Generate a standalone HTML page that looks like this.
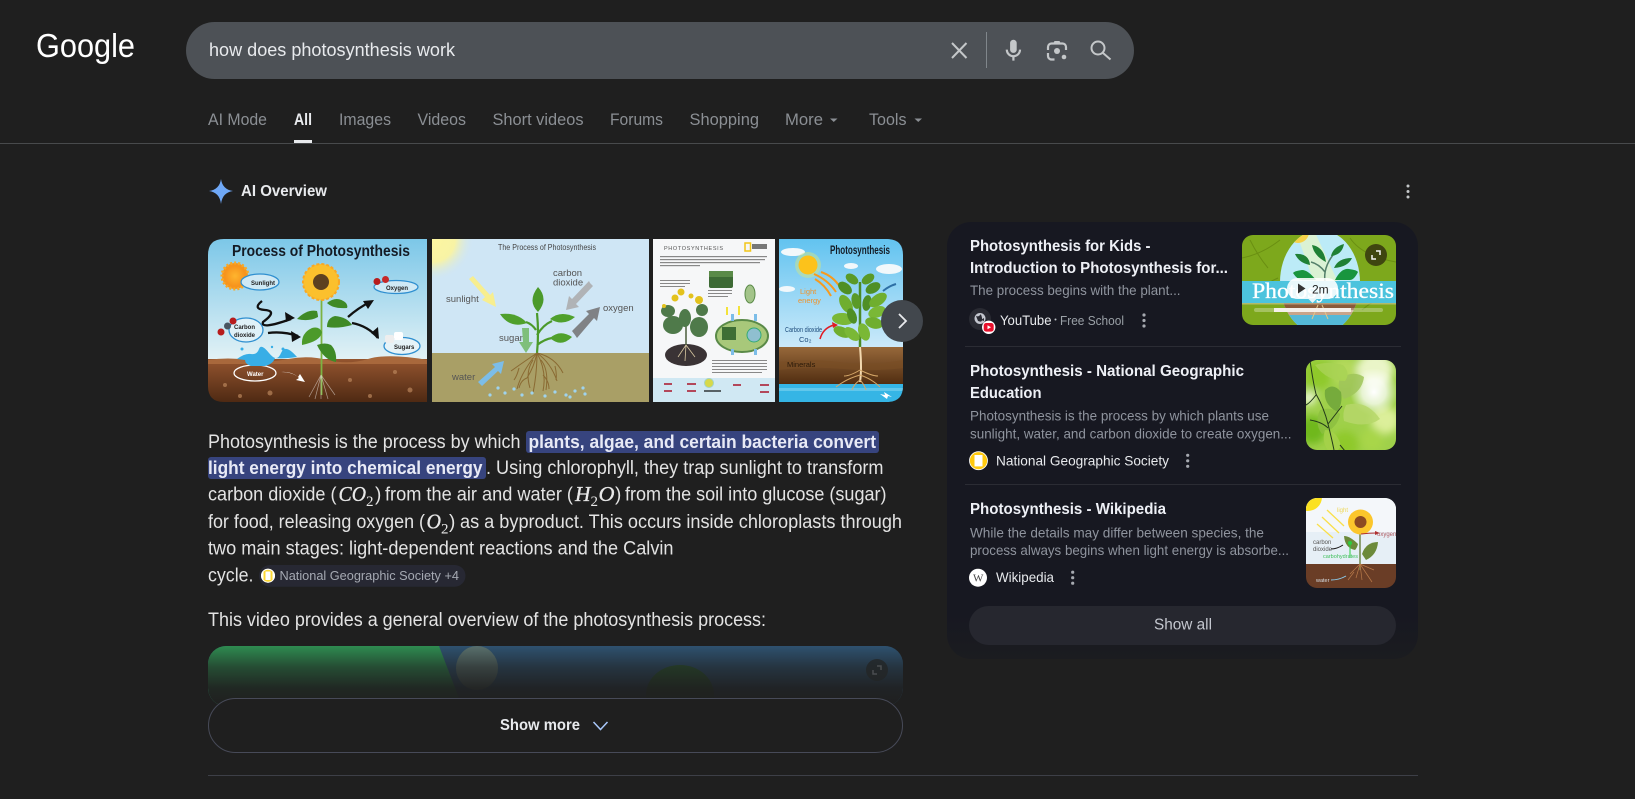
<!DOCTYPE html>
<html lang="en"><head><meta charset="utf-8"><title>how does photosynthesis work - Google Search</title>
<style>
html,body{margin:0;padding:0;background:#1f1f1f;width:1635px;height:799px;overflow:hidden}
svg{display:block}
text{font-family:"Liberation Sans",Arial,sans-serif}
.tab{font-size:16.5px;fill:#8b8f94}
.b{font-size:19px;fill:#e3e3e3}
.hl{font-size:18.5px;fill:#e8eaf6;font-weight:bold}
.m{font-family:"Liberation Serif",serif;font-style:italic;font-size:21px;fill:#e8e8e8;stroke:#e8e8e8;stroke-width:.3}
.s{font-family:"Liberation Serif",serif;font-size:15px;fill:#e8e8e8}
.t{font-size:15.5px;font-weight:bold;fill:#eef0f6}
.sn{font-size:14px;fill:#8f949e}
.src{font-size:14px;fill:#e8eaed}
.lbl{font-weight:bold;fill:#222}
</style></head><body>
<svg width="1635" height="799" viewBox="0 0 1635 799" xmlns="http://www.w3.org/2000/svg">
<defs>
<clipPath id="c1"><path d="M224 239H427V402H224Q208 402 208 386V255Q208 239 224 239Z"/></clipPath>
<clipPath id="c2"><rect x="432" y="239" width="217" height="163"/></clipPath>
<clipPath id="c3"><rect x="653" y="239" width="122" height="163"/></clipPath>
<clipPath id="c4"><path d="M779 239H887Q903 239 903 255V386Q903 402 887 402H779Z"/></clipPath>
<clipPath id="c5"><rect x="1242" y="235" width="154" height="90" rx="11"/></clipPath>
<clipPath id="c6"><rect x="1306" y="360" width="90" height="90" rx="11"/></clipPath>
<clipPath id="c7"><rect x="1306" y="498" width="90" height="90" rx="11"/></clipPath>
<clipPath id="c8"><rect x="208" y="646" width="695" height="60" rx="18"/></clipPath>
<clipPath id="ov"><ellipse cx="1320" cy="282" rx="40" ry="52"/></clipPath>
<linearGradient id="sky1" x1="0" y1="0" x2="0" y2="1"><stop offset="0" stop-color="#7cc7e8"/><stop offset="1" stop-color="#e6f3f6"/></linearGradient>
<linearGradient id="soil1" x1="0" y1="0" x2="0" y2="1"><stop offset="0" stop-color="#94552f"/><stop offset="1" stop-color="#4f2a13"/></linearGradient>
<linearGradient id="sky4" x1="0" y1="0" x2="0" y2="1"><stop offset="0" stop-color="#62c3f0"/><stop offset="1" stop-color="#cdeafa"/></linearGradient>
<linearGradient id="soil4" x1="0" y1="0" x2="0" y2="1"><stop offset="0" stop-color="#97683a"/><stop offset="1" stop-color="#4f2c10"/></linearGradient>
<linearGradient id="fade" x1="0" y1="0" x2="0" y2="1"><stop offset="0" stop-color="#1f1f1f" stop-opacity=".05"/><stop offset=".35" stop-color="#1f1f1f" stop-opacity=".6"/><stop offset=".7" stop-color="#1f1f1f" stop-opacity=".92"/><stop offset="1" stop-color="#1f1f1f"/></linearGradient>
<linearGradient id="panelfade" x1="0" y1="0" x2="0" y2="1"><stop offset="0" stop-color="#171821"/><stop offset=".9" stop-color="#171821"/><stop offset="1" stop-color="#1b1c20"/></linearGradient>
<radialGradient id="sun2"><stop offset="0" stop-color="#fdf6a0"/><stop offset=".55" stop-color="#f8f3a5"/><stop offset="1" stop-color="#cfe6f5" stop-opacity="0"/></radialGradient>
<radialGradient id="sun1"><stop offset="0" stop-color="#ffb52e"/><stop offset="1" stop-color="#f7941d"/></radialGradient>
<radialGradient id="glow"><stop offset="0" stop-color="#fff"/><stop offset=".5" stop-color="#fff" stop-opacity=".75"/><stop offset="1" stop-color="#fff" stop-opacity="0"/></radialGradient>
<filter id="bl"><feGaussianBlur stdDeviation="4"/></filter>
</defs>
<rect width="1635" height="799" fill="#1f1f1f"/>

<!-- header -->
<text x="36" y="57" font-size="33" fill="#fff" textLength="99" lengthAdjust="spacingAndGlyphs">Google</text>
<rect x="186" y="22" width="948" height="57" rx="28.5" fill="#4d5156"/>
<text x="209" y="56" font-size="18.500" fill="#e8eaed" textLength="246" lengthAdjust="spacingAndGlyphs">how does photosynthesis work</text>
<path d="M952 43L966.500 58M966.500 43L952 58" stroke="#c4c7c9" stroke-width="2" fill="none"/>
<rect x="986" y="32" width="1" height="36" fill="#80868b"/>
<g transform="translate(1000.200 37.500) scale(1.1)" fill="#c4c7c9"><path d="M12 14c1.660 0 3-1.340 3-3V5c0-1.660-1.340-3-3-3S9 3.340 9 5v6c0 1.660 1.340 3 3 3z"/><path d="M17 11c0 2.760-2.240 5-5 5s-5-2.240-5-5H5c0 3.530 2.610 6.430 6 6.920V21h2v-3.080c3.390-.49 6-3.390 6-6.920h-2z"/></g>
<g fill="none" stroke="#c4c7c9" stroke-width="2.200"><path d="M1048 50v-3a3.500 3.500 0 0 1 3.500-3.500h11a3.500 3.500 0 0 1 3.500 3.500v3"/><path d="M1048 53v3a3.500 3.500 0 0 0 3.500 3.500h3"/></g>
<path d="M1053 44l1.500-3h5l1.500 3z" fill="#c4c7c9"/><circle cx="1057" cy="51" r="3" fill="#c4c7c9"/><circle cx="1064" cy="57" r="2.300" fill="#c4c7c9"/>
<g fill="none" stroke="#c4c7c9" stroke-width="2"><circle cx="1098" cy="48" r="6.500"/><path d="M1103 53L1110.500 59.500"/></g>

<!-- tabs -->
<text class="tab" x="208" y="125" textLength="59" lengthAdjust="spacingAndGlyphs">AI Mode</text>
<text class="tab" x="294" y="125" textLength="18" lengthAdjust="spacingAndGlyphs" style="fill:#e8eaed;font-weight:bold">All</text>
<text class="tab" x="339" y="125" textLength="52" lengthAdjust="spacingAndGlyphs">Images</text>
<text class="tab" x="417.500" y="125" textLength="48.500" lengthAdjust="spacingAndGlyphs">Videos</text>
<text class="tab" x="492.500" y="125" textLength="91" lengthAdjust="spacingAndGlyphs">Short videos</text>
<text class="tab" x="610" y="125" textLength="53" lengthAdjust="spacingAndGlyphs">Forums</text>
<text class="tab" x="689.500" y="125" textLength="69.500" lengthAdjust="spacingAndGlyphs">Shopping</text>
<text class="tab" x="785" y="125" textLength="38" lengthAdjust="spacingAndGlyphs">More</text>
<path d="M830 118.500h7.500l-3.750 3.500z" fill="#8b8f94"/>
<text class="tab" x="869" y="125" textLength="37.500" lengthAdjust="spacingAndGlyphs">Tools</text>
<path d="M914.500 118.500h7.500l-3.750 3.500z" fill="#8b8f94"/>
<rect x="0" y="143" width="1635" height="1" fill="#484a4c"/>
<rect x="294" y="140" width="18" height="3" fill="#e8eaed"/>

<!-- AI overview heading -->
<path d="M221 179C222 186 226 190 233 191C226 192 222 196 221 204C220 196 216 192 209 191C216 190 220 186 221 179Z" fill="#6fa8f7"/>
<text x="241" y="196" font-size="15.500" font-weight="bold" fill="#e8eaed" textLength="86" lengthAdjust="spacingAndGlyphs">AI Overview</text>
<g fill="#c4c7c9"><circle cx="1408" cy="186" r="1.500"/><circle cx="1408" cy="191.500" r="1.500"/><circle cx="1408" cy="197" r="1.500"/></g>

<!-- image 1 -->
<g clip-path="url(#c1)">
<rect x="208" y="239" width="219" height="125" fill="url(#sky1)"/>
<rect x="208" y="359" width="219" height="43" fill="url(#soil1)"/>
<path d="M208 360q20-3 40 0t40-1 40 1 40-1 60 1v4H208z" fill="#a8683c"/>
<g fill="#b9855b" opacity=".7"><circle cx="225" cy="385" r="2"/><circle cx="270" cy="393" r="2.500"/><circle cx="350" cy="380" r="2"/><circle cx="395" cy="372" r="2"/><circle cx="410" cy="390" r="2.500"/><circle cx="240" cy="396" r="2"/><circle cx="370" cy="396" r="2"/></g>
<text x="232" y="256" font-size="15.500" font-weight="bold" fill="#141a24" textLength="178" lengthAdjust="spacingAndGlyphs">Process of Photosynthesis</text>
<circle cx="235" cy="276" r="13" fill="#f7941d" stroke="#f9a825" stroke-width="3" stroke-dasharray="2 2"/><circle cx="235" cy="276" r="10" fill="url(#sun1)"/>
<ellipse cx="260" cy="282" rx="19" ry="8" fill="#cfe9f5" stroke="#2f8fd0" stroke-width="1.300"/>
<text class="lbl" x="251" y="285" font-size="6">Sunlight</text>
<ellipse cx="396" cy="287" rx="22" ry="6.500" fill="#cfe9f5" stroke="#2f8fd0" stroke-width="1.300"/>
<text class="lbl" x="386" y="290" font-size="6">Oxygen</text>
<circle cx="377" cy="281.500" r="3.500" fill="#b71c1c"/><circle cx="385.500" cy="279.500" r="3.500" fill="#c62828"/>
<ellipse cx="246" cy="330" rx="17" ry="12" fill="#dff1f8" stroke="#2f8fd0" stroke-width="1.300"/>
<text class="lbl" x="234" y="329" font-size="6">Carbon</text><text class="lbl" x="234" y="337" font-size="6">dioxide</text>
<circle cx="221" cy="332" r="3.500" fill="#b71c1c"/><circle cx="227.500" cy="326" r="3.500" fill="#4a5560"/><circle cx="233" cy="321" r="3.500" fill="#b71c1c"/>
<ellipse cx="402" cy="346" rx="18" ry="8.500" fill="#e6f3f8" stroke="#2f8fd0" stroke-width="1.300"/>
<text class="lbl" x="394" y="349" font-size="6">Sugars</text>
<rect x="385" y="335" width="9" height="8" fill="#eee" rx="2"/><rect x="394" y="332" width="9" height="8" fill="#fff" rx="2"/>
<ellipse cx="255" cy="373" rx="21" ry="8" fill="none" stroke="#fff" stroke-width="1.300"/>
<text x="247" y="376" font-size="6" font-weight="bold" fill="#fff">Water</text>
<path d="M237 359q8-6 14-5t8-5 10 4 12 0 16 4q-14 2-22 1q-2 6-10 8h-14q-6-2-6-6z" fill="#38aee6"/>
<g fill="#38aee6"><circle cx="242" cy="349" r="1.500"/><circle cx="283" cy="349" r="1.500"/><circle cx="272" cy="347" r="1.200"/></g>
<g fill="none" stroke="#111" stroke-width="2.300"><path d="M262 301q-10 8 3 9t-2 12q-3 8 28-3"/><path d="M268 333q15-2 30 3"/><path d="M348 317q10-9 22-15"/><path d="M352 323q16 3 26 15"/></g>
<g fill="#111"><path d="M295 318l-10-6 1 10z"/><path d="M301 337l-10-6 1 11z"/><path d="M374 300l-11 1 5 8z"/><path d="M379 339l-1-12-7 6z"/></g>
<path d="M281 372q12 0 18 6l-3 2 9 2-5-8-2 3q-7-6-17-5z" fill="#fff"/>
<path d="M321.500 298V395" stroke="#7cb342" stroke-width="1.800"/>
<g stroke="#fff" stroke-opacity=".5" stroke-width=".7" fill="none"><path d="M321 375l-12 22M321 375l-6 24M321 375l0 24M321 375l7 24M321 375l14 20"/></g>
<circle cx="321" cy="282" r="18" fill="#fbc02d" stroke="#f9a825" stroke-width="2" stroke-dasharray="3 2"/><circle cx="321" cy="282" r="8" fill="#5d4020"/>
<g fill="#3f8a26"><path d="M327 303q10-8 19 0q2 3 1 5q-14 1-20-5z"/><path d="M297 319q10-10 20-8q1 4 1 6q-9 5-21 2z"/><path d="M327 327q0-9 8-11q12 1 17 9q-14 4-25 2z"/><path d="M302 345q-1-12 10-17q7-2 10 4q-1 9-20 13z" fill="#4c9a2a"/><path d="M317 345q8-3 14 0q6 6 5 17q-12-2-19-17z"/></g>
</g>

<!-- image 2 -->
<g clip-path="url(#c2)">
<rect x="432" y="239" width="217" height="114" fill="#cfe6f5"/>
<circle cx="432" cy="239" r="42" fill="url(#sun2)"/>
<rect x="432" y="353" width="217" height="49" fill="#a99f66"/>
<text x="498" y="250" font-size="8" fill="#444" textLength="98" lengthAdjust="spacingAndGlyphs">The Process of Photosynthesis</text>
<g font-size="9.500" fill="#555"><text x="446" y="302">sunlight</text><text x="499" y="341">sugars</text><text x="452" y="380">water</text><text x="553" y="276">carbon</text><text x="553" y="285.500">dioxide</text><text x="603" y="311">oxygen</text></g>
<path d="M469 279l4-3 17 19 3-3 3 15-14-7 3-3z" fill="#f7ee8f"/>
<path d="M590 283l3 3-17 18 3 3-13 3 3-14 3 3 17-18z" fill="#b0b3b6"/>
<path d="M575 335l-3-4 17-17-3-3 14-4-3 14-3-3-17 20z" fill="#808285"/>
<path d="M522 328h7v14h4l-7 11-7-11h4z" fill="#7fbf7b"/>
<path d="M482 386l-4-4 17-15-3-3 12-3-3 13-3-3-16 15z" fill="#7cbde8"/>
<path d="M537 353q2-20 0-40M537 335q6-10 15-14M537 345q8-6 15-7M536 330q-4-6-10-8" stroke="#4b9a2a" stroke-width="2.200" fill="none"/>
<path d="M538 312q-11-11 0-25q11 12 0 25z" fill="#4b9a2a"/>
<path d="M527 323q-10-11-27-9q10 15 27 9z" fill="#4fa02c"/>
<path d="M550 319q10-9 25-2q-12 10-25 2z" fill="#4fa02c"/>
<path d="M550 338q10-9 22-1q-11 11-22 1z" fill="#4fa02c"/>
<g fill="none" stroke="#8a6a32" stroke-width="1"><path d="M537 353q-3 14-10 25M537 353q-12 8-26 18M537 353q-16 20-20 36M537 353q0 20-4 40M537 353q10 18 6 38M537 353q14 10 20 28M537 353q18 4 26 20M527 378q-6 2-8 10M543 375q6 6 6 14M519 368q-2 8-5 12M555 366q2 8 1 14M533 360q-8 12-3 28M541 360q8 10 5 30"/></g>
<g fill="#9fd3ee"><circle cx="498" cy="388" r="1.600"/><circle cx="505" cy="393" r="1.600"/><circle cx="514" cy="389" r="1.600"/><circle cx="522" cy="395" r="1.600"/><circle cx="532" cy="393" r="1.600"/><circle cx="545" cy="396" r="1.600"/><circle cx="555" cy="392" r="1.600"/><circle cx="566" cy="395" r="1.600"/><circle cx="575" cy="391" r="1.600"/><circle cx="585" cy="394" r="1.600"/><circle cx="583" cy="388" r="1.600"/><circle cx="490" cy="395" r="1.600"/><circle cx="570" cy="397" r="1.600"/></g>
</g>

<!-- image 3 -->
<g clip-path="url(#c3)">
<rect x="653" y="239" width="122" height="163" fill="#f6f7f8"/>
<rect x="653" y="378" width="122" height="24" fill="#d0e8f3"/>
<text x="664" y="250" font-size="5.500" fill="#555" textLength="60" letter-spacing="1">PHOTOSYNTHESIS</text>
<rect x="745" y="243" width="5.500" height="8" fill="none" stroke="#f2c618" stroke-width="1.500"/>
<rect x="752" y="244" width="15" height="5" fill="#777"/>
<g fill="#888"><rect x="660" y="256" width="107" height="1.200"/><rect x="660" y="259" width="105" height="1.200"/><rect x="660" y="262" width="100" height="1.200"/><rect x="660" y="265" width="40" height="1.200"/><rect x="660" y="280" width="30" height="1"/><rect x="660" y="283" width="30" height="1"/><rect x="660" y="286" width="25" height="1"/><rect x="708" y="290" width="24" height="1"/><rect x="708" y="293" width="24" height="1"/><rect x="708" y="296" width="20" height="1"/><rect x="712" y="360" width="55" height="1"/><rect x="712" y="363" width="55" height="1"/><rect x="712" y="366" width="55" height="1"/><rect x="712" y="369" width="55" height="1"/><rect x="712" y="372" width="50" height="1"/></g>
<rect x="709" y="271" width="24" height="17" rx="2" fill="#3d6a35"/><rect x="709" y="271" width="24" height="6" fill="#5a8a48"/>
<ellipse cx="750" cy="294" rx="5" ry="9" fill="#a3c48a" stroke="#5a8a48"/>
<ellipse cx="742" cy="336" rx="26" ry="16" fill="#a8c87a" stroke="#5a8a48" stroke-width="2"/>
<rect x="722" y="327" width="14" height="13" fill="#3e6e35"/><circle cx="754" cy="335" r="7" fill="#8fbfd0" stroke="#3a7" stroke-width="1"/>
<g fill="#7cbde8"><rect x="731" y="314" width="3" height="7"/><rect x="754" y="314" width="3" height="7"/><rect x="731" y="349" width="3" height="6"/><rect x="754" y="349" width="3" height="6"/></g>
<g fill="#f3e23a"><rect x="726" y="307" width="2" height="8"/><rect x="738" y="306" width="2" height="9"/></g>
<ellipse cx="686" cy="355" rx="21" ry="11" fill="#3a3335"/>
<path d="M686 345V310" stroke="#4a5c3a" stroke-width="1.500"/><path d="M686 345l-8 12M686 345l-1 16M686 345l9 12" stroke="#d7c7a0" stroke-width=".8" fill="none"/>
<g fill="#4f7a4a"><ellipse cx="673" cy="325" rx="10" ry="9"/><ellipse cx="699" cy="327" rx="9" ry="10"/><ellipse cx="685" cy="318" rx="6" ry="9"/><ellipse cx="668" cy="311" rx="7" ry="6"/><ellipse cx="702" cy="310" rx="6" ry="6"/></g>
<g fill="#e3c21d"><circle cx="675" cy="298" r="3.500"/><circle cx="681" cy="292" r="3.500"/><circle cx="699" cy="300" r="4"/><circle cx="691" cy="296" r="2.500"/><circle cx="664" cy="306" r="2"/></g>
<g fill="#b3475a"><rect x="664" y="383" width="8" height="2"/><rect x="664" y="390" width="8" height="2"/><rect x="687" y="383" width="9" height="2"/><rect x="687" y="390" width="9" height="2"/><rect x="733" y="384" width="8" height="2"/><rect x="760" y="384" width="9" height="2"/><rect x="760" y="391" width="9" height="2"/></g>
<circle cx="709" cy="383" r="4.500" fill="#d7d94a" stroke="#a5d3c0"/><path d="M704 391h17" stroke="#111" stroke-width="1.200"/>
</g>

<!-- image 4 -->
<g clip-path="url(#c4)">
<rect x="779" y="239" width="124" height="110" fill="url(#sky4)"/>
<rect x="779" y="347" width="124" height="38" fill="url(#soil4)"/>
<path d="M779 362q30-4 60 0t64-2v8q-30 4-60 1t-64 1z" fill="#7a4f24" opacity=".6"/>
<rect x="779" y="384" width="124" height="18" fill="#35b5e5"/>
<rect x="779" y="388" width="124" height="3" fill="#7fd3ef" opacity=".6"/>
<g fill="#f2f8fb"><ellipse cx="793" cy="252" rx="12" ry="4"/><ellipse cx="851" cy="266" rx="7" ry="3"/><ellipse cx="787" cy="289" rx="8" ry="3"/><ellipse cx="889" cy="269" rx="13" ry="5"/></g>
<circle cx="808" cy="265" r="13" fill="#cde58a" opacity=".5"/><circle cx="808" cy="265" r="9.500" fill="#fcc21b"/>
<text x="830" y="254" font-size="11.500" font-weight="bold" fill="#141c26" textLength="60" lengthAdjust="spacingAndGlyphs">Photosynthesis</text>
<g fill="none" stroke="#f79a1e" stroke-width="2"><path d="M814 274q14 6 22 18"/><path d="M815 279q10 6 16 17"/><path d="M821 272q12 4 19 15"/></g>
<text x="800" y="294" font-size="7.500" fill="#f0932b">Light</text><text x="798" y="303" font-size="7.500" fill="#f0932b">energy</text>
<text x="785" y="332" font-size="7.500" fill="#1c4a7a" textLength="37" lengthAdjust="spacingAndGlyphs">Carbon dioxide</text><text x="799" y="342" font-size="7.500" fill="#1c4a7a">Co₂</text>
<path d="M820 339q3-11 14-14" fill="none" stroke="#e01b24" stroke-width="1.500"/><path d="M838 325l-6-3 1 6z" fill="#e01b24"/>
<text x="787" y="367" font-size="7.500" fill="#2b1a0a">Minerals</text>
<path d="M860 347V282" stroke="#4b8a24" stroke-width="2.500"/>
<g fill="#6fae2f">
<ellipse cx="852" cy="279" rx="7" ry="4.500" transform="rotate(35 852 279)" fill="#5a9a28"/>
<ellipse cx="868" cy="279" rx="7" ry="4.500" transform="rotate(-35 868 279)" fill="#5a9a28"/>
<ellipse cx="845" cy="288" rx="8" ry="5" transform="rotate(40 845 288)" fill="#4f8f25"/>
<ellipse cx="873" cy="288" rx="8" ry="5" transform="rotate(-30 873 288)" fill="#4f8f25"/>
<ellipse cx="846" cy="304" rx="10" ry="5.500" transform="rotate(60 846 304)"/>
<ellipse cx="856" cy="301" rx="8" ry="4.500" transform="rotate(80 856 301)" fill="#5a9a28"/>
<ellipse cx="867" cy="303" rx="8" ry="4.500" transform="rotate(100 867 303)" fill="#4f8f25"/>
<ellipse cx="878" cy="300" rx="10" ry="5.500" transform="rotate(-35 878 300)"/>
<ellipse cx="843" cy="319" rx="11" ry="6" transform="rotate(5 843 319)" fill="#7ab836"/>
<ellipse cx="877" cy="312" rx="9" ry="5.500" transform="rotate(-20 877 312)" fill="#7ab836"/>
<ellipse cx="852" cy="316" rx="8" ry="4.500" transform="rotate(70 852 316)" fill="#4f8f25"/>
<ellipse cx="874" cy="323" rx="9" ry="5.500" transform="rotate(15 874 323)"/>
<ellipse cx="842" cy="332" rx="9" ry="5" transform="rotate(25 842 332)"/>
<ellipse cx="864" cy="332" rx="9" ry="5.500" transform="rotate(70 864 332)" fill="#7ab836"/>
<ellipse cx="852" cy="334" rx="9" ry="5" transform="rotate(40 852 334)" fill="#7ab836"/>
</g>
<path d="M883 291q6-5 13-7" fill="none" stroke="#2d6fa5" stroke-width="2"/>
<path d="M860 347q2 22 0 35" stroke="#f3d9b0" stroke-width="2" fill="none"/>
<g fill="none" stroke="#d6a869" stroke-width="1"><path d="M860 370q-10 6-16 6M860 370q12 6 18 6M860 375q-14 4-24 12M860 375q12 4 20 12M860 380q-6 4-8 10M860 380q4 4 6 10"/></g>
<path d="M892 397l-8-5 1 3-5-1 7 5 1-3z" fill="#fff"/>
</g>
<circle cx="902" cy="321" r="21" fill="#42474d"/>
<path d="M899 314l7 7-7 7" fill="none" stroke="#e8eaed" stroke-width="1.800"/>

<!-- paragraph -->
<text class="b" x="208" y="448" textLength="312.500" lengthAdjust="spacingAndGlyphs">Photosynthesis is the process by which</text>
<rect x="526" y="431" width="353" height="22" rx="3" fill="#37447e"/>
<text class="hl" x="528.500" y="448" textLength="347.500" lengthAdjust="spacingAndGlyphs">plants, algae, and certain bacteria convert</text>
<rect x="208" y="457" width="278" height="22" rx="3" fill="#37447e"/>
<text class="hl" x="208" y="474" textLength="274.500" lengthAdjust="spacingAndGlyphs">light energy into chemical energy</text>
<text class="b" x="486" y="474" textLength="397.500" lengthAdjust="spacingAndGlyphs">. Using chlorophyll, they trap sunlight to transform</text>
<text class="b" x="208" y="500.500" textLength="128.500" lengthAdjust="spacingAndGlyphs">carbon dioxide (</text>
<text class="m" x="338.500" y="501" textLength="27.500" lengthAdjust="spacingAndGlyphs">CO</text><text class="s" x="366" y="506">2</text>
<text class="b" x="375" y="500.500">)</text>
<text class="b" x="385" y="500.500" textLength="188" lengthAdjust="spacingAndGlyphs">from the air and water (</text>
<text class="m" x="575" y="501" textLength="15.500" lengthAdjust="spacingAndGlyphs">H</text><text class="s" x="590.500" y="506">2</text><text class="m" x="598.500" y="501" textLength="16" lengthAdjust="spacingAndGlyphs">O</text>
<text class="b" x="615" y="500.500">)</text>
<text class="b" x="625" y="500.500" textLength="261.500" lengthAdjust="spacingAndGlyphs">from the soil into glucose (sugar)</text>
<text class="b" x="208" y="528" textLength="217" lengthAdjust="spacingAndGlyphs">for food, releasing oxygen (</text>
<text class="m" x="426.500" y="528.500" textLength="14.500" lengthAdjust="spacingAndGlyphs">O</text><text class="s" x="441" y="533.500">2</text>
<text class="b" x="449" y="528">)</text>
<text class="b" x="460" y="528" textLength="442" lengthAdjust="spacingAndGlyphs">as a byproduct. This occurs inside chloroplasts through</text>
<text class="b" x="208" y="554.500" textLength="465.500" lengthAdjust="spacingAndGlyphs">two main stages: light-dependent reactions and the Calvin</text>
<text class="b" x="208" y="581.500" textLength="45.500" lengthAdjust="spacingAndGlyphs">cycle.</text>
<rect x="259" y="565" width="206.500" height="21.700" rx="10.800" fill="#272833"/>
<circle cx="268" cy="575.700" r="7" fill="#fff"/><rect x="264.500" y="570.500" width="7" height="10.500" fill="none" stroke="#fdd835" stroke-width="2" rx="1"/><circle cx="268" cy="575.700" r="6.500" fill="none" stroke="#fff" stroke-width="1"/>
<text x="279.500" y="580" font-size="13" fill="#a5a9b2" textLength="179.500" lengthAdjust="spacingAndGlyphs">National Geographic Society +4</text>
<text class="b" x="208" y="626" textLength="558" lengthAdjust="spacingAndGlyphs">This video provides a general overview of the photosynthesis process:</text>

<!-- video -->
<g clip-path="url(#c8)">
<rect x="208" y="646" width="695" height="60" fill="#2f5473"/>
<path d="M208 646H439L462 706H208Z" fill="#2f9153"/>
<ellipse cx="477" cy="668" rx="21" ry="22" fill="#7c8a70" opacity=".6"/>
<ellipse cx="680" cy="695" rx="34" ry="30" fill="#2a5a30"/>
<rect x="208" y="646" width="695" height="60" fill="url(#fade)"/>
</g>
<circle cx="877" cy="670" r="11" fill="#232526" opacity=".8"/>
<path d="M877 666h4v4M873 670v4h4" fill="none" stroke="#4a4d50" stroke-width="1.500"/>
<rect x="208.500" y="698.500" width="694" height="54" rx="27" fill="#1f1f1f" stroke="#474a58"/>
<text x="500" y="730" font-size="15.500" font-weight="bold" fill="#e8eaed" textLength="80" lengthAdjust="spacingAndGlyphs">Show more</text>
<path d="M593.500 722L600.500 729.500 607.500 722" fill="none" stroke="#a8c7fa" stroke-width="1.500"/>
<rect x="208" y="775" width="1210" height="1" fill="#3d3f47"/>

<!-- right panel -->
<rect x="947" y="222" width="471" height="437" rx="24" fill="url(#panelfade)"/>
<text class="t" x="970" y="251" textLength="180.500" lengthAdjust="spacingAndGlyphs">Photosynthesis for Kids -</text>
<text class="t" x="970" y="273" textLength="258" lengthAdjust="spacingAndGlyphs">Introduction to Photosynthesis for...</text>
<text class="sn" x="970" y="295" textLength="210.500" lengthAdjust="spacingAndGlyphs">The process begins with the plant...</text>
<circle cx="980" cy="319" r="11" fill="#2a2b33"/>
<circle cx="980" cy="318.500" r="5.500" fill="#c4c7cf"/><path d="M976 316q3 1 4-1t2 3-4 3zM981 320l3-2 0 3z" fill="#2a2b33"/>
<circle cx="988.700" cy="327.300" r="6.700" fill="#fff"/><rect x="983.700" y="323" width="10" height="8.600" rx="2.500" fill="#e8112d"/><path d="M987.500 325.300l3.500 2-3.500 2z" fill="#fff"/>
<text class="src" x="1000" y="325" textLength="51.500" lengthAdjust="spacingAndGlyphs">YouTube</text>
<circle cx="1055.500" cy="319.500" r="1" fill="#bdc1c6"/>
<text x="1060" y="325" font-size="13" fill="#9aa0a6" textLength="64" lengthAdjust="spacingAndGlyphs">Free School</text>
<g fill="#a6a9b0"><circle cx="1144" cy="315" r="1.600"/><circle cx="1144" cy="320.500" r="1.600"/><circle cx="1144" cy="326" r="1.600"/></g>

<g clip-path="url(#c5)">
<rect x="1242" y="235" width="154" height="90" fill="#7da81c"/>
<g stroke="#6a8f12" stroke-width="1" fill="none"><path d="M1242 258q20-4 38-18M1246 300q14-14 32-22M1350 238q12 18 46 24M1362 310q16-14 34-16M1250 240q8 16 18 28"/></g>
<ellipse cx="1320" cy="282" rx="40" ry="52" fill="#bcebf7"/>
<g clip-path="url(#ov)">
<path d="M1296 232l16-6 26 56-22 6z" fill="#e6f4c8" opacity=".75"/>
<circle cx="1298" cy="232" r="11" fill="#f6d24a"/>
<rect x="1280" y="303" width="80" height="8" fill="#8a5a3a"/>
<rect x="1280" y="310" width="80" height="5" fill="#c8a48a"/>
<rect x="1280" y="315" width="80" height="12" fill="#54b9d8"/>
<path d="M1318 305l-6 14M1322 305l6 14" stroke="#e0c68a" stroke-width="1"/>
</g>
<path d="M1325 282q-2-14 8-27M1325 272q-6-8-14-10" stroke="#54806a" stroke-width="1.500" fill="none"/>
<g fill="#1f8035"><path d="M1326 262q-12-6-14-17q12 2 14 17z"/><path d="M1331 256q2-9 13-12q-2 11-13 12z"/><path d="M1310 265q-11-2-15-11q14-1 15 11z"/><path d="M1334 268q4-10 18-10q-4 9-18 10z"/><path d="M1316 280q-8-10-14-10q-8 1-9 3q5 8 11 7h12z" fill="#19953e"/><path d="M1335 280q6-12 14-11q8 1 9 3q-4 8-8 8z" fill="#19953e"/></g>
<rect x="1242" y="281" width="154" height="22" fill="#4cc3dd"/>
<rect x="1242" y="303" width="154" height="1.500" fill="#d6c7a0" opacity=".6"/>
<text x="1252" y="298" font-size="22" fill="#fff" style="font-family:'Liberation Serif',serif;stroke:#fff;stroke-width:.3" textLength="142" lengthAdjust="spacingAndGlyphs">Photosynthesis</text>
<rect x="1287" y="278" width="51" height="21" rx="10.500" fill="#fff" fill-opacity=".88"/>
<path d="M1308.500 299l4 4 4-4z" fill="#fff" fill-opacity=".85"/>
<path d="M1298 283.500l7.500 5-7.500 5z" fill="#333"/>
<text x="1312" y="293.500" font-size="12" fill="#222">2m</text>
<rect x="1254" y="308" width="129" height="4" rx="2" fill="#fff" fill-opacity=".3"/>
<rect x="1274" y="308" width="77" height="4" fill="#f5f0ea"/>
<circle cx="1376" cy="255" r="11" fill="#3f4610"/>
<path d="M1376 251h4v4M1372 255v4h4" fill="none" stroke="#f5f5f5" stroke-width="1.500"/>
</g>
<rect x="965" y="346" width="436" height="1" fill="#2b2c34"/>

<text class="t" x="970" y="376" textLength="274" lengthAdjust="spacingAndGlyphs">Photosynthesis - National Geographic</text>
<text class="t" x="970" y="398" textLength="71.500" lengthAdjust="spacingAndGlyphs">Education</text>
<text class="sn" x="970" y="420.500" textLength="299" lengthAdjust="spacingAndGlyphs">Photosynthesis is the process by which plants use</text>
<text class="sn" x="970" y="438.500" textLength="321.500" lengthAdjust="spacingAndGlyphs">sunlight, water, and carbon dioxide to create oxygen...</text>
<circle cx="978.500" cy="460.700" r="9" fill="#ffc90e"/><rect x="974.500" y="455" width="8" height="11.400" fill="#fff"/><circle cx="978.500" cy="460.700" r="9" fill="none" stroke="#fff" stroke-width=".8"/>
<text class="src" x="996" y="465.500" textLength="173" lengthAdjust="spacingAndGlyphs">National Geographic Society</text>
<g fill="#a6a9b0"><circle cx="1187.700" cy="455.300" r="1.600"/><circle cx="1187.700" cy="460.800" r="1.600"/><circle cx="1187.700" cy="466.300" r="1.600"/></g>

<g clip-path="url(#c6)">
<rect x="1306" y="360" width="90" height="90" fill="#9fd04a"/>
<g filter="url(#bl)"><circle cx="1318" cy="375" r="14" fill="#8fc92a"/><circle cx="1345" cy="372" r="14" fill="#b4d95c"/><circle cx="1375" cy="370" r="18" fill="#eaf5c8"/><circle cx="1312" cy="430" r="14" fill="#6fb81e"/><circle cx="1345" cy="445" r="14" fill="#8fc92a"/><circle cx="1385" cy="420" r="14" fill="#dcef9a"/><circle cx="1372" cy="440" r="12" fill="#a8d648"/><circle cx="1309" cy="398" r="7" fill="#e8f5d0"/></g>
<circle cx="1374" cy="392" r="24" fill="url(#glow)"/>
<g opacity=".85"><path d="M1340 378q14-8 24-1q-2 16-20 22q-8-10-4-21z" fill="#9fc55a"/><path d="M1325 390q8-8 16 2q2 12-4 20q-14-8-12-22z" fill="#6fa53a"/><path d="M1346 405q20-6 34 14q-14 10-36 2q-2-8 2-16z" fill="#b7d76a"/><path d="M1320 410q12-4 20 4q-2 14-18 20q-8-10-2-24z" fill="#8cc040"/><path d="M1325 430q12 0 16 16q-6 10-12 6q-8-10-4-22z" fill="#a6d24a"/><path d="M1315 365q12-4 28 0q8 8 2 16q-18 0-30-16z" fill="#a9d354"/></g>
<path d="M1310 360q3 22 6 34q8 14 12 30q4 16 6 26M1328 424l14-18M1316 395q-6 8-10 10M1310 420q12 2 18 8M1340 445l5 6" fill="none" stroke="#23391a" stroke-width="1"/>
</g>
<rect x="965" y="484" width="436" height="1" fill="#2b2c34"/>

<text class="t" x="970" y="514" textLength="196" lengthAdjust="spacingAndGlyphs">Photosynthesis - Wikipedia</text>
<text class="sn" x="970" y="537.500" textLength="294" lengthAdjust="spacingAndGlyphs">While the details may differ between species, the</text>
<text class="sn" x="970" y="555" textLength="319" lengthAdjust="spacingAndGlyphs">process always begins when light energy is absorbe...</text>
<circle cx="978" cy="577.700" r="9" fill="#fff"/>
<text x="973" y="581.500" font-size="11" fill="#444" style="font-family:'Liberation Serif',serif">W</text>
<text class="src" x="996" y="582" textLength="58" lengthAdjust="spacingAndGlyphs">Wikipedia</text>
<g fill="#a6a9b0"><circle cx="1072.700" cy="572.200" r="1.600"/><circle cx="1072.700" cy="577.700" r="1.600"/><circle cx="1072.700" cy="583.200" r="1.600"/></g>

<g clip-path="url(#c7)">
<rect x="1306" y="498" width="90" height="66" fill="#e6eff6"/>
<rect x="1306" y="498" width="90" height="34" fill="#f4f7fa"/>
<rect x="1306" y="564" width="90" height="24" fill="#6a3d26"/>
<circle cx="1308" cy="497" r="14" fill="#fbe120"/>
<g stroke="#f9df4a" stroke-width="1.300"><path d="M1327 510l17 16M1322 517l17 16M1317 524l16 14"/></g>
<text x="1337" y="512" font-size="6" fill="#efd85a">light</text>
<path d="M1360 570V528" stroke="#70874a" stroke-width="1.500"/>
<circle cx="1360.500" cy="522" r="12.500" fill="#fbc62c"/><circle cx="1360.500" cy="522" r="6" fill="#8c4a22"/>
<path d="M1358 544q-8-8-14-8q1 12 11 14q2-2 3-6z" fill="#6c8a3a"/><path d="M1362 554q4-12 16-12q-1 13-12 18z" fill="#6c8a3a"/>
<circle cx="1350" cy="543" r="2" fill="#2ecc40"/>
<path d="M1350 545v13" stroke="#2ecc40" stroke-width="1"/>
<path d="M1361 534q8-1 15-1" stroke="#b03030" stroke-width="1"/><path d="M1375 531l5 2-5 2z" fill="#b03030"/>
<text x="1377" y="536" font-size="6" fill="#b05a60">oxygen</text>
<text x="1313" y="544" font-size="6" fill="#555">carbon</text><text x="1313" y="551" font-size="6" fill="#555">dioxide</text>
<path d="M1331 549q6 0 12-4" stroke="#111" fill="none"/>
<text x="1323" y="558" font-size="5.500" fill="#3fbf5a" textLength="35">carbohydrates</text>
<g fill="none" stroke="#b97a4a" stroke-width=".7"><path d="M1360 564l-10 10M1360 564l-4 14M1360 564l2 16M1360 564l8 12M1360 564l14 6M1354 572l-6 8M1368 576l4 6"/></g>
<text x="1316" y="582" font-size="5.500" fill="#d8dfe4">water</text><path d="M1331 580q8 0 15-4" stroke="#8ccff0" fill="none"/>
</g>

<rect x="969" y="606" width="427" height="39" rx="19.500" fill="#26272f"/>
<text x="1154" y="629.500" font-size="15.500" fill="#c4c7cf" textLength="58" lengthAdjust="spacingAndGlyphs">Show all</text>
</svg>
</body></html>
